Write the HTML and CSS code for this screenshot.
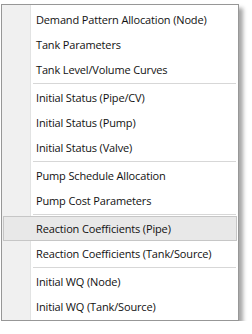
FILE: index.html
```html
<!DOCTYPE html>
<html>
<head>
<meta charset="utf-8">
<link rel="stylesheet" href="styles.css">
</head>
<body>
<div class="menu">
  <div class="item"><span class="label">Demand Pattern Allocation (Node)</span></div>
  <div class="item"><span class="label">Tank Parameters</span></div>
  <div class="item"><span class="label">Tank Level/Volume Curves</span></div>
  <div class="sep"></div>
  <div class="item"><span class="label">Initial Status (Pipe/CV)</span></div>
  <div class="item"><span class="label">Initial Status (Pump)</span></div>
  <div class="item"><span class="label">Initial Status (Valve)</span></div>
  <div class="sep"></div>
  <div class="item"><span class="label">Pump Schedule Allocation</span></div>
  <div class="item"><span class="label">Pump Cost Parameters</span></div>
  <div class="sep"></div>
  <div class="item hover"><span class="label">Reaction Coefficients (Pipe)</span></div>
  <div class="item"><span class="label">Reaction Coefficients (Tank/Source)</span></div>
  <div class="sep"></div>
  <div class="item"><span class="label">Initial WQ (Node)</span></div>
  <div class="item"><span class="label">Initial WQ (Tank/Source)</span></div>
</div>
</body>
</html>
```
FILE: styles.css
```css
html, body {
  margin: 0;
  padding: 0;
  background: #ffffff;
}
body {
  padding: 4px 0 0 1px;
  font-family: "Open Sans", "Noto Sans", sans-serif;
  font-size: 11px;
  letter-spacing: -0.15px;
  color: #111;
}
.menu {
  border: 1px solid #979797;
  padding: 2px 1px 1px 1px;
  box-sizing: content-box;
  width: 234px;
  background: linear-gradient(to right, #f0f0f0 0, #f0f0f0 28px, #e2e3e3 28px, #e2e3e3 29px, #ffffff 29px);
  box-shadow: 4px 4px 4px rgba(0,0,0,0.35);
}
.item {
  height: 25px;
  display: flex;
  align-items: center;
  padding-left: 32px;
  border: 1px solid transparent;
  box-sizing: border-box;
}
.item.hover {
  background: #e8e8e8;
  border-color: #c6c6c6;
}
.label {
  white-space: nowrap;
}
.sep {
  height: 3px;
  margin-left: 30px;
  margin-right: 1px;
  display: flex;
  align-items: center;
}
.sep::before {
  content: "";
  display: block;
  height: 1px;
  width: 100%;
  background: #d7d7d7;
}
```
